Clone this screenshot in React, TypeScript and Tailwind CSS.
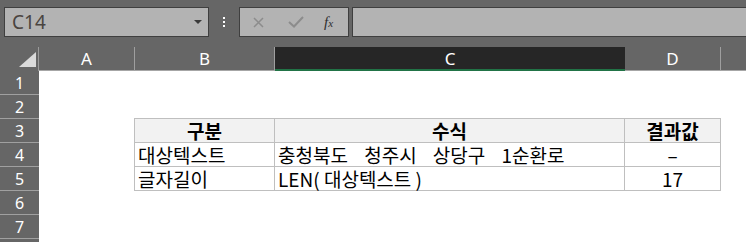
import React from 'react';

const columns = [
  { id: 'A', width: 'w-[96px]', active: false },
  { id: 'B', width: 'w-[140px]', active: false },
  { id: 'C', width: 'w-[350px]', active: true },
  { id: 'D', width: 'w-[96px]', active: false },
];

// row 8 is cut by the window edge, its number is not visible
const rowNumbers = ['1', '2', '3', '4', '5', '6', '7', ''];

const tableRows = [
  { label: '대상텍스트', formula: '충청북도 청주시 상당구 1순환로', result: '–', wide: true },
  { label: '글자길이', formula: 'LEN( 대상텍스트 )', result: '17', wide: false },
];

function Corner() {
  return (
    <div className="w-[39px] h-full border-r border-[#9a9a9a] relative">
      <svg className="absolute left-[19px] top-[5px]" width="17" height="15" viewBox="0 0 17 15">
        <polygon points="17,0 17,15 0,15" fill="#dadada" />
      </svg>
    </div>
  );
}

export default function App() {
  const kr = "font-['Noto_Sans_CJK_KR',sans-serif]";
  return (
    <div className="w-[746px] h-[242px] overflow-hidden bg-white font-['Noto_Sans',sans-serif]">
      {/* formula bar */}
      <div className="h-[47px] bg-[#666666] flex items-start pt-[7px]">
        <div className="ml-[4px] w-[205px] h-[30px] border border-[#3f3f3f] bg-[#b3b3b3] flex items-center justify-between pl-[7px] pr-[6px]">
          <span className="text-[19px] text-[#4a4440] leading-none">C14</span>
          <svg width="8" height="4" viewBox="0 0 8 4">
            <polygon points="0,0 8,0 4,4" fill="#3a3a3a" />
          </svg>
        </div>
        <div className="w-[30px] h-[30px] flex flex-col items-center justify-center gap-[2px]">
          <span className="w-[2px] h-[2px] bg-white" />
          <span className="w-[2px] h-[2px] bg-white" />
          <span className="w-[2px] h-[2px] bg-white" />
        </div>
        <div className="w-[110px] h-[30px] border border-[#3f3f3f] bg-[#b3b3b3] flex items-center">
          <svg className="ml-[13px]" width="11" height="11" viewBox="0 0 11 11">
            <path d="M1 1L10 10M10 1L1 10" stroke="#8c8c8c" strokeWidth="1.5" />
          </svg>
          <svg className="ml-[24px]" width="16" height="12" viewBox="0 0 16 12">
            <path d="M1 6L6 10.5L15 1" stroke="#8c8c8c" strokeWidth="2" fill="none" />
          </svg>
          <span className="ml-[20px] font-['Liberation_Serif',serif] italic text-[15px] text-[#2e2e2e] leading-none">
            f<span className="text-[11px]">x</span>
          </span>
        </div>
        <div className="ml-[3px] flex-1 h-[30px] border border-[#3f3f3f] border-r-0 bg-[#b3b3b3]" />
      </div>

      {/* column headers */}
      <div className="h-[24px] bg-[#666666] flex">
        <Corner />
        {columns.map((c) => (
          <div
            key={c.id}
            className={`${c.width} h-full flex items-center justify-center text-[17px] text-white leading-none ${
              c.active ? 'bg-[#262626] border-b-2 border-[#217346]' : 'border-r border-b border-r-[#9f9f9f] border-b-[#a6a6a6]'
            }`}
          >
            {c.id}
          </div>
        ))}
        <div className="flex-1 h-full border-b border-[#a6a6a6]" />
      </div>

      {/* sheet body */}
      <div className="flex">
        <div className="w-[39px] bg-[#666666] flex flex-col">
          {rowNumbers.map((n, i) => (
            <div
              key={i}
              className="h-[24px] shrink-0 border-b border-[#a0a0a0] flex items-center justify-center text-[16px] text-white leading-none"
            >
              {n}
            </div>
          ))}
        </div>
        <div className={`flex-1 pt-[47px] pl-[95px] ${kr} text-black`}>
          <div className="w-fit border-l border-t border-[#bfbfbf]">
            <div className="flex h-[24px] bg-[#f2f2f2] font-bold text-[19px] leading-[23px]">
              <div className="w-[140px] border-r border-b border-[#bfbfbf] text-center">구분</div>
              <div className="w-[350px] border-r border-b border-[#bfbfbf] text-center">수식</div>
              <div className="w-[96px] border-r border-b border-[#bfbfbf] text-center">결과값</div>
            </div>
            {tableRows.map((r) => (
              <div key={r.label} className="flex h-[24px] text-[19px] leading-[23px]">
                <div className="w-[140px] border-r border-b border-[#bfbfbf] pl-[3px]">{r.label}</div>
                <div
                  className={`w-[350px] border-r border-b border-[#bfbfbf] pl-[3px] whitespace-pre ${
                    r.wide ? '[word-spacing:12px]' : ''
                  }`}
                >
                  {r.formula}
                </div>
                <div className="w-[96px] border-r border-b border-[#bfbfbf] text-center">{r.result}</div>
              </div>
            ))}
          </div>
        </div>
      </div>
    </div>
  );
}
